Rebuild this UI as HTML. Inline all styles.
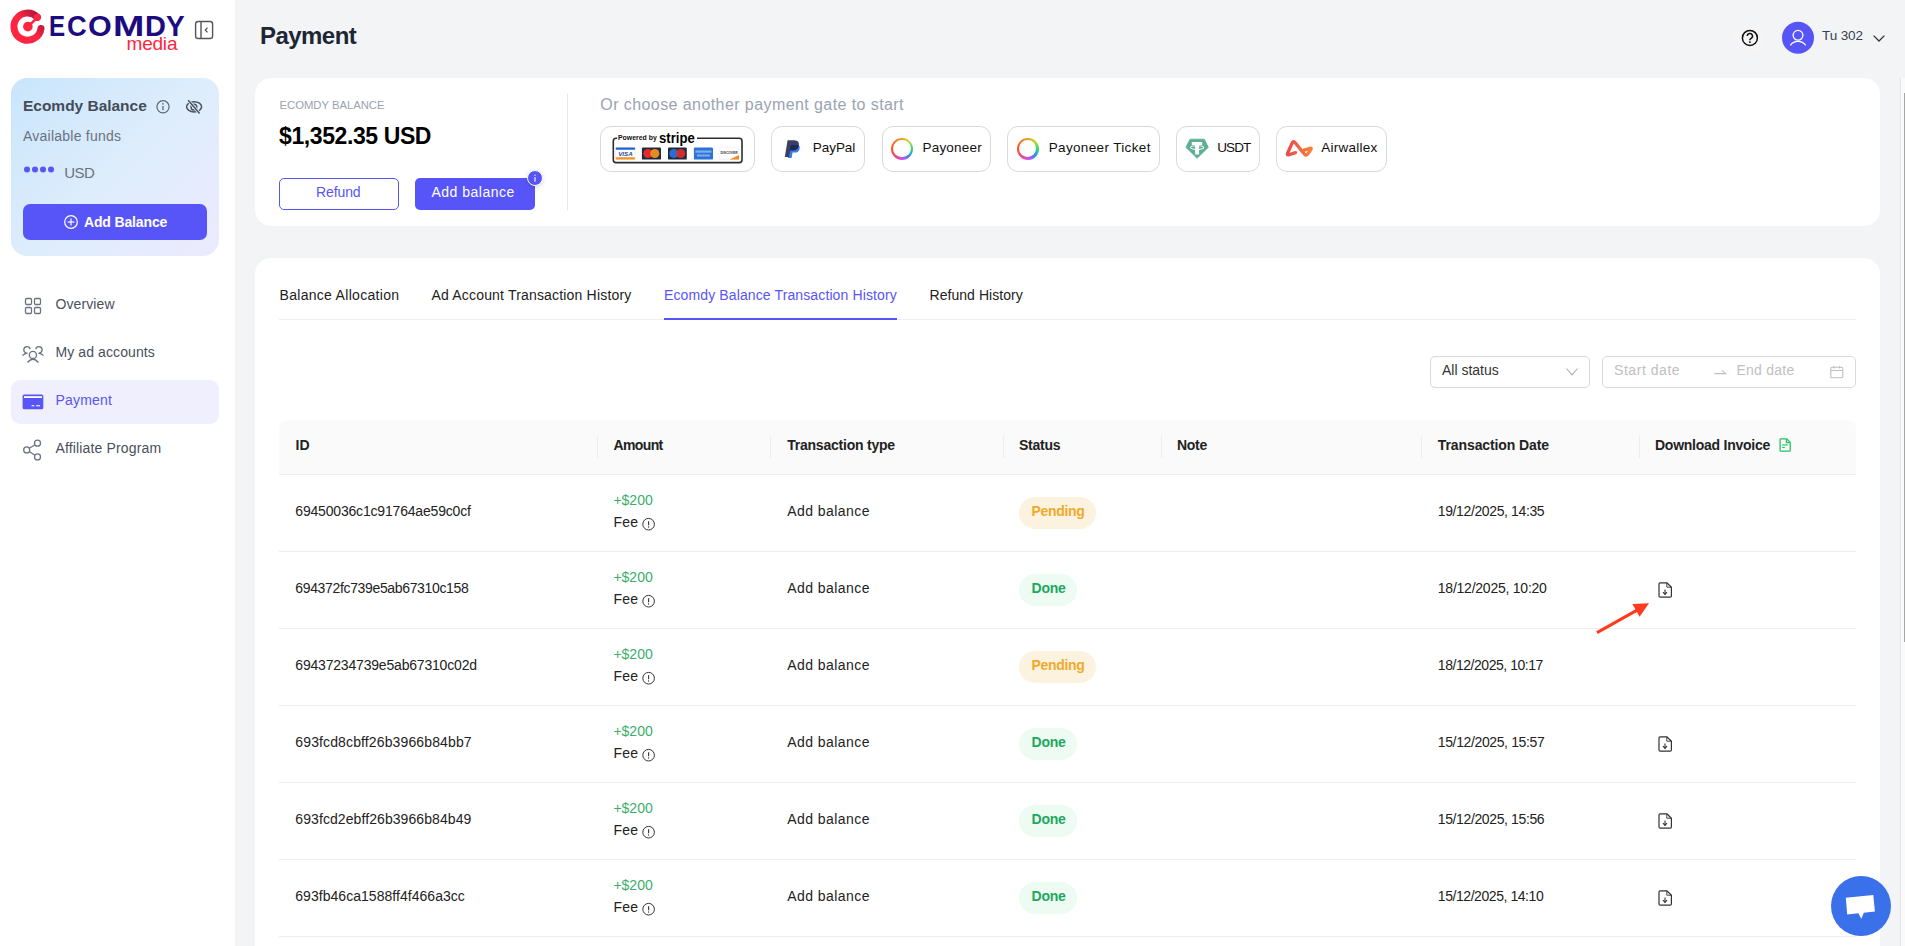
<!DOCTYPE html>
<html><head><meta charset="utf-8"><title>Payment</title><style>
*{box-sizing:border-box;margin:0;padding:0}
html,body{width:1905px;height:946px;overflow:hidden}
body{font-family:"Liberation Sans",sans-serif;background:#F3F4F6;position:relative;color:#1F2937}
.t{position:absolute;white-space:nowrap;line-height:1}
.b{position:absolute}
svg{position:absolute;overflow:visible}
</style></head><body>
<div class="b" style="left:0;top:0;width:235px;height:946px;background:#fff"></div>
<svg style="left:0;top:0" width="235" height="60" viewBox="0 0 235 60">
<defs><linearGradient id="lg1" x1="0.15" y1="0.6" x2="0.85" y2="0"><stop offset="0.35" stop-color="#FF2442"/><stop offset="1" stop-color="#B0163A"/></linearGradient></defs>
<path d="M41.0 28.5 A13.6 13.6 0 1 1 37.3 17.2" fill="none" stroke="url(#lg1)" stroke-width="7" stroke-linecap="round"/>
<circle cx="37.4" cy="17.3" r="3.6" fill="#FF2442"/>
<line x1="37.4" y1="17.3" x2="28" y2="26.6" stroke="#FF2442" stroke-width="2.6"/>
<circle cx="27.9" cy="26.6" r="4.8" fill="#FF2442"/>
</svg>
<div class="t" style="left:49.1px;top:12.42px;font-size:28.8px;color:#1D0B80;font-weight:bold;transform:scaleX(0.840);transform-origin:0 0;">E</div>
<div class="t" style="left:67.06px;top:12.42px;font-size:28.8px;color:#1D0B80;font-weight:bold;transform:scaleX(0.947);transform-origin:0 0;">C</div>
<div class="t" style="left:88.13px;top:12.42px;font-size:28.8px;color:#1D0B80;font-weight:bold;transform:scaleX(1.060);transform-origin:0 0;">O</div>
<div class="t" style="left:113.02px;top:12.42px;font-size:28.8px;color:#1D0B80;font-weight:bold;transform:scaleX(1.307);transform-origin:0 0;">M</div>
<div class="t" style="left:145.29px;top:12.42px;font-size:28.8px;color:#1D0B80;font-weight:bold;transform:scaleX(1.006);transform-origin:0 0;">D</div>
<div class="t" style="left:165.81px;top:12.42px;font-size:28.8px;color:#1D0B80;font-weight:bold;transform:scaleX(0.973);transform-origin:0 0;">Y</div>
<div class="t" style="left:126.5px;top:33.92px;font-size:19px;color:#FF2442;letter-spacing:-0.2px;">media</div>
<svg style="left:0;top:0" width="235" height="60"><rect x="195.6" y="21.5" width="17" height="17" rx="2.6" fill="none" stroke="#555" stroke-width="1.4"/><line x1="201" y1="22" x2="201" y2="38" stroke="#555" stroke-width="1.4"/><path d="M207.5 27.6 L205.3 30 L207.5 32.4" fill="none" stroke="#555" stroke-width="1.3"/></svg>
<div class="b" style="left:11px;top:78px;width:208px;height:178px;border-radius:16px;background:linear-gradient(135deg,#C9E5FC 0%,#DDEDFC 50%,#ECEAFD 100%)"></div>
<div class="t" style="left:23px;top:97.98px;font-size:15.5px;color:#454B57;font-weight:bold;letter-spacing:-0.02px;">Ecomdy Balance</div>
<svg style="left:0;top:0" width="235" height="260">
<circle cx="163" cy="106.8" r="6.1" fill="none" stroke="#5F6673" stroke-width="1.2"/><line x1="163" y1="105.9" x2="163" y2="110.3" stroke="#5F6673" stroke-width="1.3"/><circle cx="163" cy="103.9" r="0.8" fill="#5F6673"/>
<ellipse cx="194.1" cy="106.8" rx="7.5" ry="5.1" fill="none" stroke="#4A505C" stroke-width="1.5"/><circle cx="193.9" cy="107.1" r="2.9" fill="none" stroke="#4A505C" stroke-width="1.4"/><line x1="188.2" y1="100.3" x2="199.6" y2="113.4" stroke="#E0ECFC" stroke-width="3"/><line x1="188.2" y1="100.3" x2="199.6" y2="113.4" stroke="#4A505C" stroke-width="1.5"/>
<circle cx="27" cy="169.6" r="3" fill="#5755F7"/><circle cx="35" cy="169.6" r="3" fill="#5755F7"/><circle cx="43" cy="169.6" r="3" fill="#5755F7"/><circle cx="51" cy="169.6" r="3" fill="#5755F7"/>
</svg>
<div class="t" style="left:23px;top:129.25px;font-size:14px;color:#6B7280;letter-spacing:0.24px;">Available funds</div>
<div class="t" style="left:64.2px;top:165.20px;font-size:15px;color:#6B7280;letter-spacing:-0.5px;">USD</div>
<div class="b" style="left:23px;top:204px;width:184px;height:36px;border-radius:7px;background:#5755F7"></div>
<svg style="left:0;top:0" width="235" height="260"><circle cx="71" cy="222" r="6.3" fill="none" stroke="#fff" stroke-width="1.2"/><line x1="71" y1="218.6" x2="71" y2="225.4" stroke="#fff" stroke-width="1.2"/><line x1="67.6" y1="222" x2="74.4" y2="222" stroke="#fff" stroke-width="1.2"/></svg>
<div class="t" style="left:84px;top:215.35px;font-size:14px;color:#fff;font-weight:bold;letter-spacing:-0.15px;">Add Balance</div>
<div class="b" style="left:11px;top:380px;width:208px;height:44px;border-radius:9px;background:#EFEFFD"></div>
<svg style="left:0;top:0" width="235" height="480">
<g fill="none" stroke="#6B7280" stroke-width="1.3">
<rect x="25.5" y="298.5" width="6" height="6" rx="1.2"/><rect x="34.5" y="298.5" width="6" height="6" rx="1.2"/><rect x="25.5" y="307.5" width="6" height="6" rx="1.2"/><rect x="34.5" y="307.5" width="6" height="6" rx="1.2"/>
<circle cx="32.9" cy="354.9" r="3.6"/><path d="M27.5 362.5 Q33 356 38.4 362.5"/>
<path d="M30.15 349.24 A3.2 3.2 0 1 0 26.44 352.95"/><path d="M27.6 353.1 Q24.5 353.3 22.4 355.6"/>
<path d="M35.75 349.24 A3.2 3.2 0 1 1 39.46 352.95"/><path d="M38.3 353.1 Q41.4 353.3 43.5 355.6"/>
<circle cx="37.5" cy="443.2" r="3"/><circle cx="26.7" cy="449.9" r="3"/><circle cx="37.5" cy="456.9" r="3"/><line x1="29.2" y1="448.3" x2="35" y2="444.8"/><line x1="29.2" y1="451.5" x2="35" y2="455.2"/>
</g>
<rect x="22.6" y="394.4" width="20.7" height="14.9" rx="1.6" fill="#5755F7"/>
<rect x="24" y="396.2" width="17.9" height="1.8" fill="#fff"/>
<rect x="31.6" y="405.2" width="2.7" height="1.1" fill="#fff"/><rect x="36.1" y="405.2" width="4" height="1.1" fill="#fff"/>
</svg>
<div class="t" style="left:55.5px;top:296.75px;font-size:14px;color:#4A4F5C;letter-spacing:0.1px;">Overview</div>
<div class="t" style="left:55.5px;top:344.75px;font-size:14px;color:#4A4F5C;letter-spacing:0.1px;">My ad accounts</div>
<div class="t" style="left:55.5px;top:392.85px;font-size:14px;color:#5755F7;letter-spacing:0.2px;">Payment</div>
<div class="t" style="left:55.5px;top:440.95px;font-size:14px;color:#4A4F5C;letter-spacing:0.15px;">Affiliate Program</div>
<div class="t" style="left:260px;top:23.68px;font-size:24px;color:#1E2633;font-weight:bold;letter-spacing:-0.55px;">Payment</div>
<svg style="left:0;top:0" width="1905" height="80">
<circle cx="1749.9" cy="37.9" r="16" fill="#F5F5F6"/>
<circle cx="1749.9" cy="37.9" r="7.5" fill="none" stroke="#111" stroke-width="1.5"/>
<path d="M1747.3 36.1 A2.6 2.6 0 1 1 1751.1 38.4 Q1749.9 39.1 1749.9 40.3" fill="none" stroke="#111" stroke-width="1.5"/><circle cx="1749.9" cy="42.1" r="0.95" fill="#111"/>
<circle cx="1798" cy="37.7" r="16" fill="#5755F7"/>
<circle cx="1798" cy="35.3" r="4.9" fill="none" stroke="#fff" stroke-width="1.3"/>
<path d="M1790.3 45.3 A9.6 9.6 0 0 1 1805.7 45.3" fill="none" stroke="#fff" stroke-width="1.3"/>
<path d="M1873.6 35.6 L1879 41 L1884.4 35.6" fill="none" stroke="#333" stroke-width="1.3"/>
</svg>
<div class="t" style="left:1822px;top:29.47px;font-size:13.5px;color:#374151;letter-spacing:-0.1px;">Tu 302</div>
<div class="b" style="left:255px;top:78px;width:1625px;height:148px;border-radius:16px;background:#fff"></div>
<div class="t" style="left:279.5px;top:99.73px;font-size:11.3px;color:#9AA3B2;letter-spacing:-0.02px;">ECOMDY BALANCE</div>
<div class="t" style="left:279px;top:124.53px;font-size:23px;color:#000;font-weight:bold;letter-spacing:-0.4px;">$1,352.35 USD</div>
<div class="b" style="left:279px;top:178px;width:120px;height:32px;border:1px solid #5755F7;border-radius:5px"></div>
<div class="t" style="left:316px;top:185.25px;font-size:14px;color:#5755F7;letter-spacing:-0.1px;">Refund</div>
<div class="b" style="left:415px;top:178px;width:120px;height:32px;border-radius:5px;background:#5755F7"></div>
<div class="t" style="left:431.5px;top:185.25px;font-size:14px;color:#fff;letter-spacing:0.5px;">Add balance</div>
<div class="b" style="left:527px;top:170.1px;width:16px;height:16px;border-radius:8px;background:#5755F7;border:1.4px solid #fff;box-shadow:0 1px 4px rgba(0,0,0,0.16)"></div>
<svg style="left:0;top:0" width="600" height="230"><line x1="535" y1="177.1" x2="535" y2="181.8" stroke="#fff" stroke-width="1.1"/><circle cx="535" cy="175.2" r="0.65" fill="#fff"/></svg>
<div class="b" style="left:567px;top:94px;width:1px;height:116px;background:#E5E7EB"></div>
<div class="t" style="left:600.3px;top:96.56px;font-size:16px;color:#9AA3B2;letter-spacing:0.42px;">Or choose another payment gate to start</div>
<div class="b" style="left:600px;top:126px;width:155px;height:46px;border:1px solid #D5D9E1;border-radius:11px;background:#fff"></div>
<div class="b" style="left:771px;top:126px;width:93.5px;height:46px;border:1px solid #D5D9E1;border-radius:11px;background:#fff"></div>
<div class="b" style="left:881.5px;top:126px;width:109.0px;height:46px;border:1px solid #D5D9E1;border-radius:11px;background:#fff"></div>
<div class="b" style="left:1007px;top:126px;width:153px;height:46px;border:1px solid #D5D9E1;border-radius:11px;background:#fff"></div>
<div class="b" style="left:1176px;top:126px;width:84px;height:46px;border:1px solid #D5D9E1;border-radius:11px;background:#fff"></div>
<div class="b" style="left:1276px;top:126px;width:111px;height:46px;border:1px solid #D5D9E1;border-radius:11px;background:#fff"></div>
<div class="t" style="left:812.8px;top:140.57px;font-size:13.5px;color:#111;letter-spacing:-0.05px;">PayPal</div>
<div class="t" style="left:922.5px;top:140.57px;font-size:13.5px;color:#111;letter-spacing:0.2px;">Payoneer</div>
<div class="t" style="left:1048.7px;top:140.57px;font-size:13.5px;color:#111;letter-spacing:0.35px;">Payoneer Ticket</div>
<div class="t" style="left:1217.3px;top:140.57px;font-size:13.5px;color:#111;letter-spacing:-0.95px;">USDT</div>
<div class="t" style="left:1321.3px;top:140.57px;font-size:13.5px;color:#111;letter-spacing:0.25px;">Airwallex</div>
<div class="b" style="left:890.7px;top:137.6px;width:22.4px;height:22.4px;border-radius:50%;background:conic-gradient(#E3A41E 0deg,#BEDB2E 45deg,#2FD77F 90deg,#3A88EE 135deg,#D24EE2 180deg,#EA4F72 225deg,#FF5322 270deg,#FF6A1E 315deg,#E3A41E 360deg)"></div>
<div class="b" style="left:893.2px;top:140.1px;width:17.4px;height:17.4px;border-radius:50%;background:#fff"></div>
<div class="b" style="left:1016.5px;top:137.5px;width:22.4px;height:22.4px;border-radius:50%;background:conic-gradient(#E3A41E 0deg,#BEDB2E 45deg,#2FD77F 90deg,#3A88EE 135deg,#D24EE2 180deg,#EA4F72 225deg,#FF5322 270deg,#FF6A1E 315deg,#E3A41E 360deg)"></div>
<div class="b" style="left:1019px;top:140px;width:17.4px;height:17.4px;border-radius:50%;background:#fff"></div>
<svg style="left:0;top:0" width="1905" height="230">
<defs>
<linearGradient id="aw1" x1="0" y1="0" x2="1" y2="0"><stop offset="0" stop-color="#EC4A4A"/><stop offset="1" stop-color="#F5813A"/></linearGradient>
</defs>
<!-- paypal -->
<clipPath id="ppc"><path d="M787.6 140.3 L794.6 140.3 Q799.6 140.6 798.9 145.4 Q798.1 150.4 792.6 150.4 L790.1 150.4 L788.8 156.9 L784.8 156.9 Z"/></clipPath>
<path d="M787.6 140.3 L794.6 140.3 Q799.6 140.6 798.9 145.4 Q798.1 150.4 792.6 150.4 L790.1 150.4 L788.8 156.9 L784.8 156.9 Z" fill="#3D3F62"/>
<path d="M790.6 144.6 L797 144.6 Q800.4 145 799.6 148.9 Q798.7 152.6 794.6 152.6 L792.6 152.6 L791.6 157.9 L787.9 157.9 Z" fill="#3A7AE8"/>
<path d="M790.6 144.6 L797 144.6 Q800.4 145 799.6 148.9 Q798.7 152.6 794.6 152.6 L792.6 152.6 L791.6 157.9 L787.9 157.9 Z" fill="#232752" clip-path="url(#ppc)"/>
<!-- tether -->
<path d="M1190 139.2 L1204.3 139.2 L1208.3 147.3 L1197.1 158.3 L1185.9 147.3 Z" fill="#5DAE94" stroke="#5DAE94" stroke-width="0.8" stroke-linejoin="round"/>
<path d="M1191.8 142.1 L1202.2 142.1 L1202.2 145.1 L1199.1 145.1 L1199.1 154.6 L1195.1 154.6 L1195.1 145.1 L1191.8 145.1 Z" fill="#fff"/>
<ellipse cx="1197.1" cy="147.6" rx="6.6" ry="1.9" fill="none" stroke="#fff" stroke-width="1.1"/>
<!-- airwallex -->
<path d="M1295.6 152.6 L1289 154.8 Q1286.6 155.5 1287.6 153.2 L1292.2 143 Q1293.5 140.6 1295.2 142.7 L1304.7 154.4 Q1306.2 156 1307.5 154.3 L1310.9 149.6 Q1312 147.8 1310 148.3 L1304.2 150.1" fill="none" stroke="url(#aw1)" stroke-width="3.3" stroke-linejoin="round" stroke-linecap="round"/>
</svg>
<svg style="left:0;top:0" width="1905" height="230">
<path d="M617.2 138.3 L616 138.3 Q613.3 138.3 613.3 141 L613.3 160 Q613.3 162.6 616 162.6 L739.4 162.6 Q742 162.6 742 160 L742 141 Q742 138.3 739.4 138.3 L697 138.3" fill="none" stroke="#2E2E2E" stroke-width="1.6"/>
<text x="617.9" y="140.1" font-family="Liberation Sans" font-weight="bold" font-size="6.6" fill="#111" textLength="38.9" lengthAdjust="spacingAndGlyphs">Powered by</text>
<text x="659" y="142.5" font-family="Liberation Sans" font-weight="bold" font-size="15.5" fill="#000" textLength="35.8" lengthAdjust="spacingAndGlyphs">stripe</text>
<rect x="615.7" y="147.4" width="19.4" height="12.2" rx="1.2" fill="#fff" stroke="#e2e2e2" stroke-width="0.5"/>
<rect x="615.7" y="147.4" width="19.4" height="2.4" rx="0.8" fill="#2062D0"/><rect x="615.7" y="157.2" width="19.4" height="2.4" rx="0.8" fill="#F6921E"/>
<text x="618.2" y="155.8" font-family="Liberation Sans" font-weight="bold" font-style="italic" font-size="6.2" fill="#1A4C9C" textLength="14.5" lengthAdjust="spacingAndGlyphs">VISA</text>
<rect x="641.9" y="147.4" width="19.1" height="12.2" rx="1.2" fill="#1D2B3F"/>
<circle cx="648" cy="153.5" r="4.6" fill="#E52A2A"/><circle cx="654.8" cy="153.5" r="4.6" fill="#F28F1E" opacity="0.95"/>
<rect x="668" y="147.4" width="18.8" height="12.2" rx="1.2" fill="#1D2B3F"/>
<circle cx="673.9" cy="153.5" r="4.6" fill="#2D6CCF"/><circle cx="680.7" cy="153.5" r="4.6" fill="#E52A2A" opacity="0.9"/>
<rect x="693.9" y="147.4" width="19.1" height="12.2" rx="1.2" fill="#2D72D9"/>
<rect x="695.5" y="150.5" width="16" height="2.2" fill="#7FAEEA"/><rect x="697" y="154.5" width="13" height="2" fill="#7FAEEA"/>
<rect x="719.2" y="147.2" width="19.9" height="12.4" rx="1.2" fill="#fff" stroke="#e6e6e6" stroke-width="0.5"/>
<text x="720.5" y="153.6" font-family="Liberation Sans" font-weight="bold" font-size="3.8" fill="#333" textLength="17" lengthAdjust="spacingAndGlyphs">DISCOVER</text>
<path d="M729.5 159.4 L739 155 L739 159.4 Z" fill="#F28A1E"/>
</svg>
<div class="b" style="left:255px;top:258px;width:1625px;height:720px;border-radius:16px;background:#fff"></div>
<div class="t" style="left:279.5px;top:287.95px;font-size:14px;color:#222;letter-spacing:0.3px;">Balance Allocation</div>
<div class="t" style="left:431.5px;top:287.95px;font-size:14px;color:#222;letter-spacing:0.18px;">Ad Account Transaction History</div>
<div class="t" style="left:664px;top:287.95px;font-size:14px;color:#5755F7;letter-spacing:0.12px;">Ecomdy Balance Transaction History</div>
<div class="t" style="left:929.5px;top:287.95px;font-size:14px;color:#222;letter-spacing:0.05px;">Refund History</div>
<div class="b" style="left:279px;top:319px;width:1577px;height:1px;background:#EEEEEE"></div>
<div class="b" style="left:664px;top:317.5px;width:233px;height:2.5px;background:#5755F7"></div>
<div class="b" style="left:1430px;top:356px;width:160px;height:32px;border:1px solid #D9D9D9;border-radius:5px"></div>
<div class="t" style="left:1442px;top:363.35px;font-size:14px;color:#333;letter-spacing:0px;">All status</div>
<div class="b" style="left:1602px;top:356px;width:254px;height:32px;border:1px solid #D9D9D9;border-radius:5px"></div>
<div class="t" style="left:1614px;top:363.35px;font-size:14px;color:#BFBFBF;letter-spacing:0.55px;">Start date</div>
<div class="t" style="left:1736.5px;top:363.35px;font-size:14px;color:#BFBFBF;letter-spacing:0.25px;">End date</div>
<svg style="left:0;top:0" width="1905" height="400">
<path d="M1566.5 368.5 L1572 374.8 L1577.5 368.5" fill="none" stroke="#AFAFAF" stroke-width="1.1"/>
<path d="M1714.3 373.6 L1725.6 373.6 L1722 370.3" fill="none" stroke="#BFBFBF" stroke-width="1.1"/>
<rect x="1830.8" y="367.3" width="12" height="10.5" rx="1" fill="none" stroke="#BFBFBF" stroke-width="1.1"/>
<line x1="1830.8" y1="370.5" x2="1842.8" y2="370.5" stroke="#BFBFBF" stroke-width="1"/>
<line x1="1834" y1="365.8" x2="1834" y2="368.5" stroke="#BFBFBF" stroke-width="1"/><line x1="1839.6" y1="365.8" x2="1839.6" y2="368.5" stroke="#BFBFBF" stroke-width="1"/>
</svg>
<div class="b" style="left:279px;top:420px;width:1577px;height:55px;border-radius:8px 8px 0 0;background:#FAFAFA;border-bottom:1px solid #EEEEEE"></div>
<div class="t" style="left:295.5px;top:438.25px;font-size:14px;color:#222;font-weight:bold;letter-spacing:0px;">ID</div>
<div class="t" style="left:613.6px;top:438.25px;font-size:14px;color:#222;font-weight:bold;letter-spacing:-0.65px;">Amount</div>
<div class="t" style="left:787.2px;top:438.25px;font-size:14px;color:#222;font-weight:bold;letter-spacing:-0.22px;">Transaction type</div>
<div class="t" style="left:1019px;top:438.25px;font-size:14px;color:#222;font-weight:bold;letter-spacing:-0.25px;">Status</div>
<div class="t" style="left:1177px;top:438.25px;font-size:14px;color:#222;font-weight:bold;letter-spacing:-0.3px;">Note</div>
<div class="t" style="left:1437.8px;top:438.25px;font-size:14px;color:#222;font-weight:bold;letter-spacing:-0.1px;">Transaction Date</div>
<div class="t" style="left:1655px;top:438.25px;font-size:14px;color:#222;font-weight:bold;letter-spacing:-0.25px;">Download Invoice</div>
<div class="b" style="left:597px;top:436px;width:1px;height:22px;background:#EDEDED"></div>
<div class="b" style="left:770px;top:436px;width:1px;height:22px;background:#EDEDED"></div>
<div class="b" style="left:1003px;top:436px;width:1px;height:22px;background:#EDEDED"></div>
<div class="b" style="left:1161px;top:436px;width:1px;height:22px;background:#EDEDED"></div>
<div class="b" style="left:1421px;top:436px;width:1px;height:22px;background:#EDEDED"></div>
<div class="b" style="left:1639px;top:436px;width:1px;height:22px;background:#EDEDED"></div>
<svg style="left:0;top:0" width="1905" height="480">
<path d="M1780.1 439.6 Q1780.1 438.8 1780.9 438.8 L1786.6 438.8 L1790.2 442.4 L1790.2 450.4 Q1790.2 451.2 1789.4 451.2 L1780.9 451.2 Q1780.1 451.2 1780.1 450.4 Z" fill="none" stroke="#25C266" stroke-width="1.3" stroke-linejoin="round"/>
<path d="M1786.4 439 L1786.4 442.6 L1790 442.6" fill="none" stroke="#25C266" stroke-width="1.2"/>
<line x1="1782.2" y1="444.9" x2="1787.8" y2="444.9" stroke="#5FD28F" stroke-width="1.6"/><line x1="1782.2" y1="447.5" x2="1784.8" y2="447.5" stroke="#25C266" stroke-width="1.2"/>
</svg>
<div class="t" style="left:295.3px;top:503.95px;font-size:14px;color:#222;letter-spacing:-0.185px;">69450036c1c91764ae59c0cf</div>
<div class="t" style="left:613.4px;top:493.15px;font-size:14px;color:#3BAE6A;letter-spacing:0px;">+$200</div>
<div class="t" style="left:613.4px;top:514.95px;font-size:14px;color:#222;letter-spacing:0.2px;">Fee</div>
<div class="t" style="left:787.2px;top:503.95px;font-size:14px;color:#222;letter-spacing:0.45px;">Add balance</div>
<div class="b" style="left:1019px;top:497px;width:77px;height:32px;border-radius:16px;background:#FBF3E0"></div>
<div class="t" style="left:1031.5px;top:503.95px;font-size:14px;color:#F0AA2A;font-weight:bold;letter-spacing:-0.3px;">Pending</div>
<div class="t" style="left:1437.8px;top:503.95px;font-size:14px;color:#222;letter-spacing:-0.381px;">19/12/2025, 14:35</div>
<div class="b" style="left:279px;top:551px;width:1577px;height:1px;background:#EDEDED"></div>
<div class="t" style="left:295.3px;top:580.95px;font-size:14px;color:#222;letter-spacing:-0.346px;">694372fc739e5ab67310c158</div>
<div class="t" style="left:613.4px;top:570.15px;font-size:14px;color:#3BAE6A;letter-spacing:0px;">+$200</div>
<div class="t" style="left:613.4px;top:591.95px;font-size:14px;color:#222;letter-spacing:0.2px;">Fee</div>
<div class="t" style="left:787.2px;top:580.95px;font-size:14px;color:#222;letter-spacing:0.45px;">Add balance</div>
<div class="b" style="left:1019px;top:574px;width:58px;height:32px;border-radius:16px;background:#EDFBF2"></div>
<div class="t" style="left:1031.5px;top:580.95px;font-size:14px;color:#1DA85E;font-weight:bold;letter-spacing:-0.2px;">Done</div>
<div class="t" style="left:1437.8px;top:580.95px;font-size:14px;color:#222;letter-spacing:-0.237px;">18/12/2025, 10:20</div>
<div class="b" style="left:279px;top:628px;width:1577px;height:1px;background:#EDEDED"></div>
<div class="t" style="left:295.3px;top:657.95px;font-size:14px;color:#222;letter-spacing:-0.190px;">69437234739e5ab67310c02d</div>
<div class="t" style="left:613.4px;top:647.15px;font-size:14px;color:#3BAE6A;letter-spacing:0px;">+$200</div>
<div class="t" style="left:613.4px;top:668.95px;font-size:14px;color:#222;letter-spacing:0.2px;">Fee</div>
<div class="t" style="left:787.2px;top:657.95px;font-size:14px;color:#222;letter-spacing:0.45px;">Add balance</div>
<div class="b" style="left:1019px;top:651px;width:77px;height:32px;border-radius:16px;background:#FBF3E0"></div>
<div class="t" style="left:1031.5px;top:657.95px;font-size:14px;color:#F0AA2A;font-weight:bold;letter-spacing:-0.3px;">Pending</div>
<div class="t" style="left:1437.8px;top:657.95px;font-size:14px;color:#222;letter-spacing:-0.456px;">18/12/2025, 10:17</div>
<div class="b" style="left:279px;top:705px;width:1577px;height:1px;background:#EDEDED"></div>
<div class="t" style="left:295.3px;top:734.95px;font-size:14px;color:#222;letter-spacing:0.128px;">693fcd8cbff26b3966b84bb7</div>
<div class="t" style="left:613.4px;top:724.15px;font-size:14px;color:#3BAE6A;letter-spacing:0px;">+$200</div>
<div class="t" style="left:613.4px;top:745.95px;font-size:14px;color:#222;letter-spacing:0.2px;">Fee</div>
<div class="t" style="left:787.2px;top:734.95px;font-size:14px;color:#222;letter-spacing:0.45px;">Add balance</div>
<div class="b" style="left:1019px;top:728px;width:58px;height:32px;border-radius:16px;background:#EDFBF2"></div>
<div class="t" style="left:1031.5px;top:734.95px;font-size:14px;color:#1DA85E;font-weight:bold;letter-spacing:-0.2px;">Done</div>
<div class="t" style="left:1437.8px;top:734.95px;font-size:14px;color:#222;letter-spacing:-0.375px;">15/12/2025, 15:57</div>
<div class="b" style="left:279px;top:782px;width:1577px;height:1px;background:#EDEDED"></div>
<div class="t" style="left:295.3px;top:811.95px;font-size:14px;color:#222;letter-spacing:0.084px;">693fcd2ebff26b3966b84b49</div>
<div class="t" style="left:613.4px;top:801.15px;font-size:14px;color:#3BAE6A;letter-spacing:0px;">+$200</div>
<div class="t" style="left:613.4px;top:822.95px;font-size:14px;color:#222;letter-spacing:0.2px;">Fee</div>
<div class="t" style="left:787.2px;top:811.95px;font-size:14px;color:#222;letter-spacing:0.45px;">Add balance</div>
<div class="b" style="left:1019px;top:805px;width:58px;height:32px;border-radius:16px;background:#EDFBF2"></div>
<div class="t" style="left:1031.5px;top:811.95px;font-size:14px;color:#1DA85E;font-weight:bold;letter-spacing:-0.2px;">Done</div>
<div class="t" style="left:1437.8px;top:811.95px;font-size:14px;color:#222;letter-spacing:-0.381px;">15/12/2025, 15:56</div>
<div class="b" style="left:279px;top:859px;width:1577px;height:1px;background:#EDEDED"></div>
<div class="t" style="left:295.3px;top:888.95px;font-size:14px;color:#222;letter-spacing:0.037px;">693fb46ca1588ff4f466a3cc</div>
<div class="t" style="left:613.4px;top:878.15px;font-size:14px;color:#3BAE6A;letter-spacing:0px;">+$200</div>
<div class="t" style="left:613.4px;top:899.95px;font-size:14px;color:#222;letter-spacing:0.2px;">Fee</div>
<div class="t" style="left:787.2px;top:888.95px;font-size:14px;color:#222;letter-spacing:0.45px;">Add balance</div>
<div class="b" style="left:1019px;top:882px;width:58px;height:32px;border-radius:16px;background:#EDFBF2"></div>
<div class="t" style="left:1031.5px;top:888.95px;font-size:14px;color:#1DA85E;font-weight:bold;letter-spacing:-0.2px;">Done</div>
<div class="t" style="left:1437.8px;top:888.95px;font-size:14px;color:#222;letter-spacing:-0.438px;">15/12/2025, 14:10</div>
<div class="b" style="left:279px;top:936px;width:1577px;height:1px;background:#EDEDED"></div>
<svg style="left:0;top:0" width="1905" height="946"><circle cx="648.6" cy="524.2" r="5.8" fill="none" stroke="#333" stroke-width="1"/><line x1="648.6" y1="521.3" x2="648.6" y2="525.2" stroke="#333" stroke-width="1.1"/><circle cx="648.6" cy="527" r="0.65" fill="#333"/><circle cx="648.6" cy="601.2" r="5.8" fill="none" stroke="#333" stroke-width="1"/><line x1="648.6" y1="598.3" x2="648.6" y2="602.2" stroke="#333" stroke-width="1.1"/><circle cx="648.6" cy="604" r="0.65" fill="#333"/><path d="M1659 584.0 Q1659 582.8 1660.2 582.8 L1666.8 582.8 L1671.4 587.1999999999999 L1671.4 596.0 Q1671.4 597.1999999999999 1670.2 597.1999999999999 L1660.2 597.1999999999999 Q1659 597.1999999999999 1659 596.0 Z" fill="none" stroke="#333" stroke-width="1.2" stroke-linejoin="round"/><path d="M1666.8 583.0999999999999 L1666.8 587.1999999999999 L1671.2 587.1999999999999" fill="none" stroke="#333" stroke-width="0.9"/><line x1="1665" y1="589.4" x2="1665" y2="594.1999999999999" stroke="#333" stroke-width="1.1"/><path d="M1663 592.1999999999999 L1665 594.4 L1667 592.1999999999999" fill="none" stroke="#333" stroke-width="1.1"/><circle cx="648.6" cy="678.2" r="5.8" fill="none" stroke="#333" stroke-width="1"/><line x1="648.6" y1="675.3" x2="648.6" y2="679.2" stroke="#333" stroke-width="1.1"/><circle cx="648.6" cy="681" r="0.65" fill="#333"/><circle cx="648.6" cy="755.2" r="5.8" fill="none" stroke="#333" stroke-width="1"/><line x1="648.6" y1="752.3" x2="648.6" y2="756.2" stroke="#333" stroke-width="1.1"/><circle cx="648.6" cy="758" r="0.65" fill="#333"/><path d="M1659 738.0 Q1659 736.8 1660.2 736.8 L1666.8 736.8 L1671.4 741.1999999999999 L1671.4 750.0 Q1671.4 751.1999999999999 1670.2 751.1999999999999 L1660.2 751.1999999999999 Q1659 751.1999999999999 1659 750.0 Z" fill="none" stroke="#333" stroke-width="1.2" stroke-linejoin="round"/><path d="M1666.8 737.0999999999999 L1666.8 741.1999999999999 L1671.2 741.1999999999999" fill="none" stroke="#333" stroke-width="0.9"/><line x1="1665" y1="743.4" x2="1665" y2="748.1999999999999" stroke="#333" stroke-width="1.1"/><path d="M1663 746.1999999999999 L1665 748.4 L1667 746.1999999999999" fill="none" stroke="#333" stroke-width="1.1"/><circle cx="648.6" cy="832.2" r="5.8" fill="none" stroke="#333" stroke-width="1"/><line x1="648.6" y1="829.3" x2="648.6" y2="833.2" stroke="#333" stroke-width="1.1"/><circle cx="648.6" cy="835" r="0.65" fill="#333"/><path d="M1659 815.0 Q1659 813.8 1660.2 813.8 L1666.8 813.8 L1671.4 818.1999999999999 L1671.4 827.0 Q1671.4 828.1999999999999 1670.2 828.1999999999999 L1660.2 828.1999999999999 Q1659 828.1999999999999 1659 827.0 Z" fill="none" stroke="#333" stroke-width="1.2" stroke-linejoin="round"/><path d="M1666.8 814.0999999999999 L1666.8 818.1999999999999 L1671.2 818.1999999999999" fill="none" stroke="#333" stroke-width="0.9"/><line x1="1665" y1="820.4" x2="1665" y2="825.1999999999999" stroke="#333" stroke-width="1.1"/><path d="M1663 823.1999999999999 L1665 825.4 L1667 823.1999999999999" fill="none" stroke="#333" stroke-width="1.1"/><circle cx="648.6" cy="909.2" r="5.8" fill="none" stroke="#333" stroke-width="1"/><line x1="648.6" y1="906.3" x2="648.6" y2="910.2" stroke="#333" stroke-width="1.1"/><circle cx="648.6" cy="912" r="0.65" fill="#333"/><path d="M1659 892.0 Q1659 890.8 1660.2 890.8 L1666.8 890.8 L1671.4 895.1999999999999 L1671.4 904.0 Q1671.4 905.1999999999999 1670.2 905.1999999999999 L1660.2 905.1999999999999 Q1659 905.1999999999999 1659 904.0 Z" fill="none" stroke="#333" stroke-width="1.2" stroke-linejoin="round"/><path d="M1666.8 891.0999999999999 L1666.8 895.1999999999999 L1671.2 895.1999999999999" fill="none" stroke="#333" stroke-width="0.9"/><line x1="1665" y1="897.4" x2="1665" y2="902.1999999999999" stroke="#333" stroke-width="1.1"/><path d="M1663 900.1999999999999 L1665 902.4 L1667 900.1999999999999" fill="none" stroke="#333" stroke-width="1.1"/></svg>
<svg style="left:0;top:0" width="1905" height="946">
<line x1="1597" y1="632.6" x2="1638" y2="609.6" stroke="#FF3A1E" stroke-width="3"/>
<path d="M1649 603.3 L1632.4 604.1 L1639.6 616.7 Z" fill="#FF3A1E"/>
</svg>
<svg style="left:0;top:0" width="1905" height="946">
<circle cx="1861" cy="906" r="30" fill="#3A70EA"/>
<path d="M1845.8 897.8 L1873.3 895 L1874.9 911.6 L1863.8 912.7 L1861.3 918.7 L1858.4 913.3 L1847.2 914.6 Z" fill="#fff"/>
</svg>
<div class="b" style="left:1900px;top:78px;width:5px;height:868px;background:#FAFAFA;border-left:1px solid #E4E4E4"></div>
<div class="b" style="left:1903.6px;top:93px;width:1.4px;height:549px;background:#A6A6A6"></div>
</body></html>
